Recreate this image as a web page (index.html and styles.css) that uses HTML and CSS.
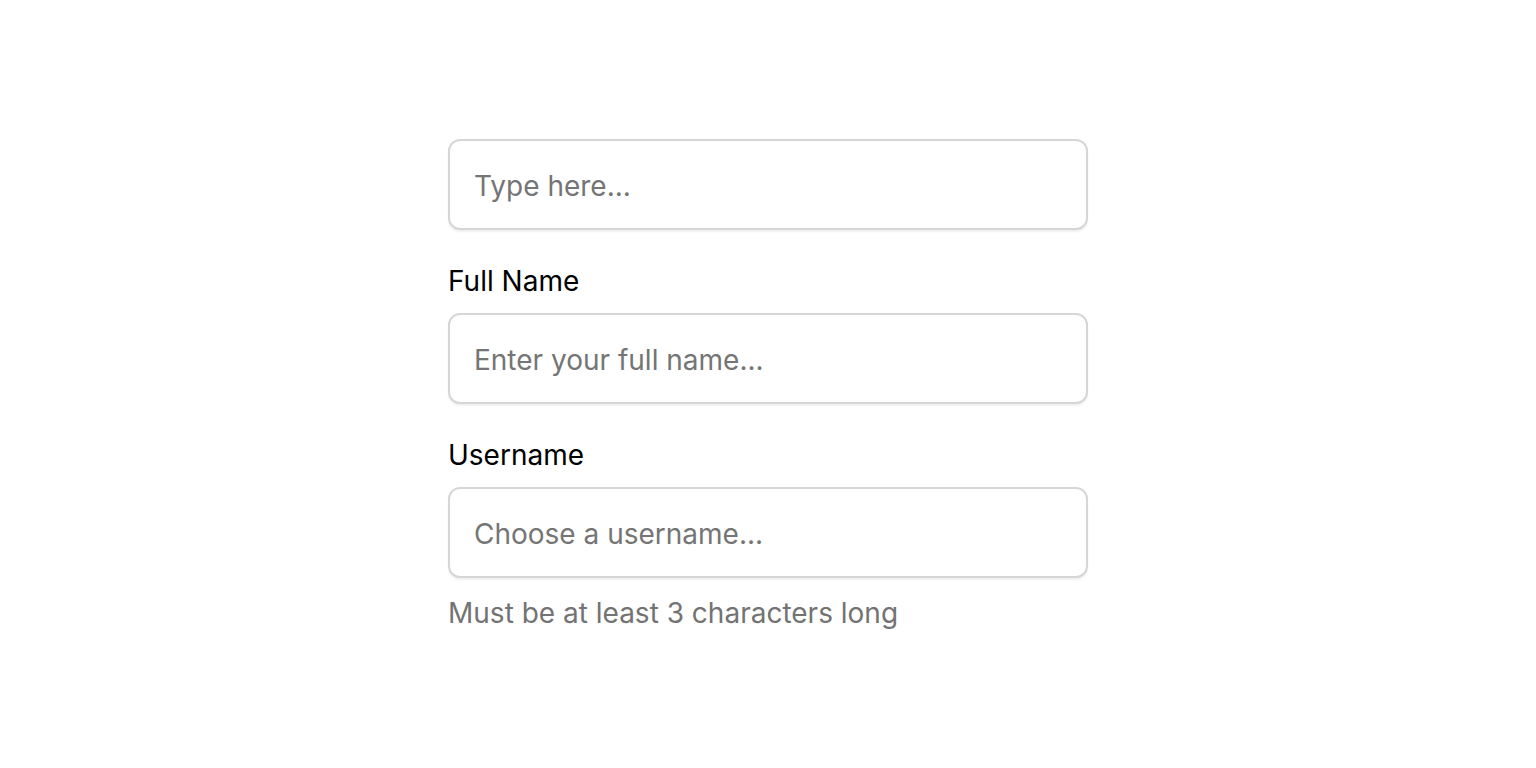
FILE: index.html
```html
<!DOCTYPE html>
<html lang="en">
<head>
<meta charset="utf-8">
<title>Form</title>
<link rel="stylesheet" href="styles.css">
</head>
<body>
<main class="page">
  <form class="form">
    <div class="field">
      <input class="input" type="text" placeholder="Type here...">
    </div>
    <div class="field">
      <label class="label" for="fullname">Full Name</label>
      <input class="input" id="fullname" type="text" placeholder="Enter your full name...">
    </div>
    <div class="field">
      <label class="label" for="username">Username</label>
      <input class="input" id="username" type="text" placeholder="Choose a username...">
      <p class="help">Must be at least 3 characters long</p>
    </div>
  </form>
</main>
</body>
</html>
```
FILE: styles.css
```css
* { box-sizing: border-box; }
html, body { margin: 0; padding: 0; background: #ffffff; }
body {
  font-family: Inter, "Liberation Sans", sans-serif;
  color: #000;
}
.page {
  min-height: 768px;
  padding-top: 5px;
  display: flex;
  align-items: center;
  justify-content: center;
}
.form {
  width: 640px;
  display: flex;
  flex-direction: column;
  gap: 30px;
}
.field {
  display: flex;
  flex-direction: column;
}
.label {
  font-size: 28px;
  line-height: 42px;
  margin-bottom: 11px;
  color: #000;
}
.input {
  height: 91px;
  width: 100%;
  padding: 2px 24px 0;
  font-family: inherit;
  font-size: 28px;
  border: 2px solid #d6d6d6;
  border-radius: 12px;
  background: #fff;
  box-shadow: 0 2px 2px rgba(0, 0, 0, 0.06);
  outline: none;
  color: #000;
}
.input::placeholder { color: #757575; opacity: 1; }
.help {
  margin: 14px 0 0;
  font-size: 28px;
  line-height: 42px;
  color: #737373;
}
```
